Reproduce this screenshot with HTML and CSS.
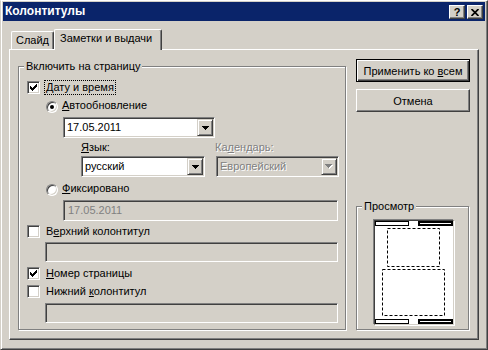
FILE: index.html
```html
<!DOCTYPE html>
<html lang="ru">
<head>
    <meta charset="UTF-8">
    <meta name="viewport" content="width=device-width, initial-scale=1.0">
    <title>Колонтитулы</title>
    <link rel="stylesheet" href="styles.css">
</head>
<body>
    <div class="window">
        <div class="titlebar">
            <span class="title">Колонтитулы</span>
            <div class="caption-btn help">?</div>
            <div class="caption-btn close">
                <svg width="8" height="7" viewBox="0 0 8 7"><path d="M0.5 0l7 7M7.5 0l-7 7" stroke="#000" stroke-width="1.7"/></svg>
            </div>
        </div>

        <div class="tabs">
            <div class="tab">Слайд</div>
            <div class="tab active">Заметки и выдачи</div>
        </div>

        <div class="panel">
            <fieldset class="group main-group">
                <legend>Включить на страницу</legend>
                <div class="group-body">
                    <div class="row date-check">
                        <span class="checkbox">
                            <svg width="7" height="7" viewBox="0 0 7 7"><path d="M0 2h1v1h1v1h1V3h1V2h1V1h1V0h1v3H6v1H5v1H4v1H3v1H2V6H1V5H0z" fill="#000"/></svg>
                        </span>
                        <span class="label focus"><u>Д</u>ату и время</span>
                    </div>

                    <div class="row radio-row auto-row">
                        <span class="radio selected"></span>
                        <span class="label"><u>А</u>втообновление</span>
                    </div>

                    <div class="combo date-combo">
                        <span class="combo-text">17.05.2011</span>
                        <span class="drop-btn">
                            <svg width="7" height="4" viewBox="0 0 7 4"><path d="M0 0h7v1H6v1H5v1H4v1H3V3H2V2H1V1H0z" fill="#000"/></svg>
                        </span>
                    </div>

                    <div class="lang-labels">
                        <span class="lang-label"><u>Я</u>зык:</span>
                        <span class="disabled-text">Ка<u>л</u>ендарь:</span>
                    </div>

                    <div class="lang-combos">
                        <div class="combo lang-combo">
                            <span class="combo-text">русский</span>
                            <span class="drop-btn">
                                <svg width="7" height="4" viewBox="0 0 7 4"><path d="M0 0h7v1H6v1H5v1H4v1H3V3H2V2H1V1H0z" fill="#000"/></svg>
                            </span>
                        </div>
                        <div class="combo cal-combo disabled">
                            <span class="combo-text disabled-text">Европейский</span>
                            <span class="drop-btn">
                                <svg width="8" height="5" viewBox="0 0 8 5">
                                    <path d="M1 1h7v1H7v1H6v1H5v1H4V4H3V3H2V2H1z" fill="#fff"/>
                                    <path d="M0 0h7v1H6v1H5v1H4v1H3V3H2V2H1V1H0z" fill="#808080"/>
                                </svg>
                            </span>
                        </div>
                    </div>

                    <div class="row radio-row fixed-row">
                        <span class="radio"></span>
                        <span class="label"><u>Ф</u>иксировано</span>
                    </div>

                    <div class="edit fixed-edit">17.05.2011</div>

                    <div class="row header-check">
                        <span class="checkbox"></span>
                        <span class="label">В<u>е</u>рхний колонтитул</span>
                    </div>

                    <div class="edit text-edit header-edit"></div>

                    <div class="row number-check">
                        <span class="checkbox">
                            <svg width="7" height="7" viewBox="0 0 7 7"><path d="M0 2h1v1h1v1h1V3h1V2h1V1h1V0h1v3H6v1H5v1H4v1H3v1H2V6H1V5H0z" fill="#000"/></svg>
                        </span>
                        <span class="label"><u>Н</u>омер страницы</span>
                    </div>

                    <div class="row footer-check">
                        <span class="checkbox"></span>
                        <span class="label">Нижний <u>к</u>олонтитул</span>
                    </div>

                    <div class="edit text-edit footer-edit"></div>
                </div>
            </fieldset>

            <div class="side">
                <div class="btn default"><span>Применить ко <u>в</u>сем</span></div>
                <div class="btn cancel"><span>Отмена</span></div>

                <fieldset class="group preview-group">
                    <legend>Просмотр</legend>
                    <div class="page">
                        <svg width="78" height="103" viewBox="0 0 78 103">
                            <rect x="0.5" y="0.5" width="33" height="4" fill="#fff" stroke="#000"/>
                            <rect x="43" y="0" width="35" height="5" fill="#000"/>
                            <rect x="45" y="2" width="31" height="1" fill="#fff"/>
                            <rect x="12.5" y="7.5" width="52" height="38" fill="none" stroke="#000" stroke-dasharray="3 2"/>
                            <rect x="7.5" y="48.5" width="62" height="46" fill="none" stroke="#000" stroke-dasharray="3 2"/>
                            <rect x="0.5" y="98.5" width="33" height="4" fill="#fff" stroke="#000"/>
                            <rect x="43" y="98" width="35" height="5" fill="#000"/>
                            <rect x="45" y="100" width="31" height="1" fill="#fff"/>
                        </svg>
                    </div>
                </fieldset>
            </div>
        </div>
    </div>
</body>
</html>
```

FILE: styles.css
```css
* {
    margin: 0;
    padding: 0;
    box-sizing: border-box;
}

body {
    background: #d4d0c8;
    font-family: "Liberation Sans", Arial, sans-serif;
    font-size: 11px;
    color: #000;
}

/* окно */
.window {
    width: 488px;
    height: 350px;
    background: #d4d0c8;
    border: 1px solid;
    border-color: #fff #404040 #404040 #d4d0c8;
    box-shadow: inset 1px 0 #fff, inset -1px -1px #808080;
    padding: 1px 2px 2px 2px;
}

.titlebar {
    height: 19px;
    background: #0a246a;
    display: flex;
    align-items: flex-start;
    padding: 3px 2px 0 2px;
}

.title {
    color: #fff;
    font-weight: bold;
    font-size: 12px;
    line-height: 19px;
    margin-top: -3px;
    margin-right: auto;
}

.caption-btn {
    width: 16px;
    height: 14px;
    background: #d4d0c8;
    border: 1px solid;
    border-color: #fff #404040 #404040 #fff;
    box-shadow: inset -1px -1px #808080;
    display: flex;
    align-items: center;
    justify-content: center;
    font-weight: bold;
    font-size: 11px;
    line-height: 1;
}

.caption-btn.close {
    margin-left: 2px;
}

/* вкладки */
.tabs {
    display: flex;
    align-items: flex-end;
    height: 20px;
    margin: 8px 0 0 8px;
}

.tab {
    width: 43px;
    height: 18px;
    border: 1px solid;
    border-bottom: 0;
    border-color: #fff #404040 #fff #fff;
    border-radius: 2px 2px 0 0;
    box-shadow: inset -1px 0 #808080;
    line-height: 17px;
    text-align: center;
}

.tab.active {
    width: 108px;
    height: 21px;
    margin-bottom: -1px;
    padding-left: 5px;
    text-align: left;
    line-height: 17px;
    background: #d4d0c8;
    position: relative;
    z-index: 1;
}

.panel {
    display: flex;
    height: 291px;
    margin: 0 6px;
    padding: 9px 7px 9px 8px;
    border: 1px solid;
    border-color: #fff #404040 #404040 #fff;
    box-shadow: inset -1px -1px #808080;
}

/* рамки групп */
.group {
    border: 1px solid #808080;
    box-shadow: inset 1px 1px #fff, 1px 1px #fff;
    min-width: 0;
}

.group legend {
    margin-left: 5px;
    padding: 0 2px;
    line-height: 13px;
    background: #d4d0c8;
}

.main-group {
    width: 328px;
    margin-top: 1px;
}

.group-body {
    padding-left: 8px;
}

.row {
    display: flex;
    align-items: center;
    height: 17px;
}

.radio-row {
    align-items: flex-start;
    margin-left: 19px;
}

.label {
    border: 1px solid transparent;
    padding: 0 1px;
    line-height: 13px;
    white-space: nowrap;
}

.label.focus {
    border: 1px dotted #000;
}

.checkbox {
    width: 13px;
    height: 13px;
    flex: none;
    margin-right: 4px;
    background: #fff;
    border: 1px solid;
    border-color: #808080 #fff #fff #808080;
    box-shadow: inset 1px 1px #404040, inset -1px -1px #d4d0c8;
    display: flex;
    align-items: center;
    justify-content: center;
}

.radio {
    width: 12px;
    height: 12px;
    flex: none;
    margin: 3px 2px 0 0;
    border-radius: 50%;
    background: #fff;
    border: 1px solid;
    border-color: #808080 #fff #fff #808080;
    box-shadow: inset 1px 1px #404040, inset -1px -1px #d4d0c8;
    display: flex;
    align-items: center;
    justify-content: center;
}

.radio.selected::after {
    content: "";
    width: 4px;
    height: 4px;
    border-radius: 50%;
    background: #000;
}

/* поля и списки */
.combo,
.edit {
    height: 21px;
    border: 1px solid;
    border-color: #808080 #fff #fff #808080;
    box-shadow: inset 1px 1px #404040, inset -1px -1px #d4d0c8;
}

.combo {
    display: flex;
    padding: 1px;
    background: #fff;
}

.combo-text {
    flex: 1;
    padding-left: 2px;
    line-height: 17px;
    white-space: nowrap;
}

.drop-btn {
    width: 16px;
    height: 17px;
    flex: none;
    background: #d4d0c8;
    border: 1px solid;
    border-color: #d4d0c8 #404040 #404040 #d4d0c8;
    box-shadow: inset 1px 1px #fff, inset -1px -1px #808080;
    display: flex;
    align-items: center;
    justify-content: center;
}

.combo.disabled {
    background: #d4d0c8;
}

.disabled-text {
    color: #808080;
    text-shadow: 1px 1px #fff;
}

.date-check {
    margin-top: 6px;
}

.auto-row {
    margin-top: 2px;
}

.date-combo {
    width: 152px;
    margin: 2px 0 0 36px;
}

.lang-labels {
    display: flex;
    height: 13px;
    line-height: 13px;
    margin: 3px 0 0 54px;
}

.lang-label {
    width: 134px;
}

.lang-combos {
    display: flex;
    gap: 11px;
    margin: 2px 0 0 54px;
}

.lang-combo {
    width: 124px;
}

.cal-combo {
    width: 123px;
}

.fixed-row {
    margin-top: 4px;
}

.edit {
    background: #d4d0c8;
    color: #808080;
    padding-left: 4px;
    line-height: 19px;
}

.fixed-edit {
    width: 275px;
    margin: 2px 0 0 36px;
}

.header-check {
    margin-top: 2px;
}

.text-edit {
    width: 293px;
    height: 20px;
    margin-left: 18px;
}

.header-edit {
    margin-top: 2px;
}

.number-check {
    margin-top: 3px;
}

.footer-check {
    margin-top: 1px;
}

.footer-edit {
    margin-top: 3px;
}

/* правая колонка */
.side {
    width: 114px;
    margin-left: 10px;
    display: flex;
    flex-direction: column;
}

.btn {
    height: 23px;
    display: flex;
    align-items: center;
    justify-content: center;
    white-space: nowrap;
}

.btn.default {
    border: 1px solid #000;
    box-shadow: inset 1px 1px #fff, inset -1px -1px #404040, inset -2px -2px #808080;
}

.btn.cancel {
    margin-top: 7px;
    border: 1px solid;
    border-color: #fff #404040 #404040 #fff;
    box-shadow: inset -1px -1px #808080;
}

.preview-group {
    width: 113px;
    margin-top: auto;
    padding: 7px 0 4px 0;
}

.page {
    width: 80px;
    height: 105px;
    margin-left: 17px;
    background: #fff;
    border: 1px solid;
    border-color: #404040 #d4d0c8 #d4d0c8 #404040;
    box-shadow: -1px -1px 0 #808080, 1px 1px 0 #fff;
}

.page svg {
    display: block;
}
```
